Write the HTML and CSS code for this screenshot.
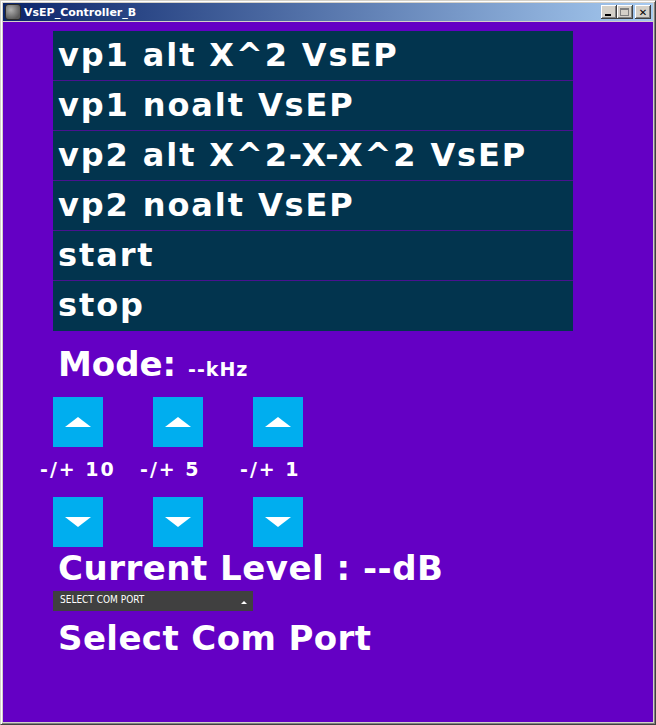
FILE: index.html
```html
<!DOCTYPE html>
<html lang="en">
<head>
  <meta charset="UTF-8" />
  <title>VsEP_Controller_B</title>
  <link rel="stylesheet" href="styles.css">
</head>
<body>
  <div class="window">
    <div class="titlebar">
      <span class="app-icon"></span>
      <span class="title">VsEP_Controller_B</span>
      <div class="caption-buttons">
        <span class="cap-btn min"><i></i></span>
        <span class="cap-btn max"><i></i></span>
        <span class="cap-btn close">&#x2715;</span>
      </div>
    </div>
    <div class="client">
      <ul class="modes">
        <li>vp1 alt X^2 VsEP</li>
        <li>vp1 noalt VsEP</li>
        <li>vp2 alt X^2-X-X^2 VsEP</li>
        <li>vp2 noalt VsEP</li>
        <li>start</li>
        <li>stop</li>
      </ul>

      <div class="mode-line">Mode: <span class="freq">--kHz</span></div>

      <div class="steppers">
        <div class="stepper">
          <button class="step up"></button>
          <span class="step-label">-/+ 10</span>
          <button class="step down"></button>
        </div>
        <div class="stepper">
          <button class="step up"></button>
          <span class="step-label">-/+ 5</span>
          <button class="step down"></button>
        </div>
        <div class="stepper">
          <button class="step up"></button>
          <span class="step-label">-/+ 1</span>
          <button class="step down"></button>
        </div>
      </div>

      <div class="level">Current Level : --dB</div>

      <div class="port-select">
        <span>SELECT COM PORT</span>
        <span class="port-arrow"></span>
      </div>

      <div class="port-status">Select Com Port</div>
    </div>
  </div>
</body>
</html>
```

FILE: styles.css
```css
:root {
  --purple: #6400c4;
  --teal: #02344e;
  --cyan: #00aeef;
  --face: #d4d0c8;
  --white: #ffffff;
}

* {
  box-sizing: border-box;
}

body {
  margin: 0;
  font-family: 'DejaVu Sans', Verdana, sans-serif;
}

.window {
  width: 656px;
  height: 725px;
  display: flex;
  flex-direction: column;
  background: var(--face);
  border: 1px solid;
  border-color: var(--face) #404040 #404040 var(--face);
  box-shadow: inset 1px 1px 0 #fff, inset -1px -1px 0 #808080;
  padding: 2px 2px 2px 2px;
}

.titlebar {
  height: 18px;
  display: flex;
  align-items: center;
  background: linear-gradient(to right, #0a246a, #a6caf0);
  color: var(--white);
  padding: 0 2px 0 2px;
}

.app-icon {
  width: 16px;
  height: 16px;
  margin-right: 3px;
  border-radius: 3px;
  background: radial-gradient(circle at 35% 35%, #b0b0b0, #5a5a5a 75%);
  border: 1px solid #2a2a2a;
}

.title {
  font-family: 'DejaVu Sans', Tahoma, sans-serif;
  font-weight: bold;
  font-size: 11px;
}

.caption-buttons {
  margin-left: auto;
  display: flex;
  align-items: center;
}

.cap-btn {
  width: 16px;
  height: 14px;
  background: var(--face);
  box-shadow: inset -1px -1px 0 #404040, inset 1px 1px 0 #fff, inset -2px -2px 0 #808080;
  display: flex;
  align-items: center;
  justify-content: center;
  color: #000;
  font-size: 10px;
  font-weight: bold;
}

.cap-btn.max {
  margin-right: 2px;
}

.cap-btn.min i {
  width: 6px;
  height: 2px;
  background: #000;
  margin-top: 6px;
  margin-left: -2px;
}

.cap-btn.max i {
  width: 9px;
  height: 8px;
  border: 1px solid #808080;
  border-top-width: 2px;
  margin-left: -1px;
}

.client {
  flex: 1;
  background: var(--purple);
  margin-top: 1px;
  padding: 9px 0 0 50px;
}

.modes {
  list-style: none;
  margin: 0;
  padding: 0;
  width: 520px;
  background: var(--teal);
}

.modes li {
  height: 50px;
  line-height: 48px;
  padding-left: 5px;
  color: var(--white);
  font-weight: bold;
  font-size: 32px;
  letter-spacing: 1.9px;
  border-bottom: 1px solid #4a1290;
}

.modes li:last-child {
  border-bottom: none;
}

.mode-line {
  margin-top: 13px;
  padding-left: 5px;
  color: var(--white);
  font-weight: bold;
  font-size: 34px;
  line-height: 40px;
}

.freq {
  font-size: 19px;
  letter-spacing: 1px;
}

.steppers {
  display: flex;
  gap: 50px;
  margin-top: 8px;
}

.stepper {
  width: 50px;
  display: flex;
  flex-direction: column;
  align-items: flex-start;
}

.step {
  width: 50px;
  height: 50px;
  border: none;
  padding: 0;
  background: var(--cyan);
  display: flex;
  align-items: center;
  justify-content: center;
}

.step::after {
  content: '';
  border-left: 13px solid transparent;
  border-right: 13px solid transparent;
}

.step.up::after {
  border-bottom: 10px solid var(--white);
}

.step.down::after {
  border-top: 10px solid var(--white);
}

.step-label {
  height: 50px;
  margin-left: -13px;
  line-height: 44px;
  color: var(--white);
  font-weight: bold;
  font-size: 19px;
  letter-spacing: 2px;
  white-space: nowrap;
}

.level {
  padding-left: 5px;
  color: var(--white);
  font-weight: bold;
  font-size: 34px;
  line-height: 42px;
  letter-spacing: 0.5px;
}

.port-select {
  margin-top: 2px;
  width: 200px;
  height: 20px;
  background: #404040;
  color: var(--white);
  display: flex;
  align-items: center;
  justify-content: space-between;
  padding: 0 6px 3px 7px;
  font-family: 'DejaVu Sans Condensed', 'Liberation Sans Narrow', sans-serif;
  font-size: 10px;
}

.port-arrow {
  margin-top: 6px;
  border-left: 3px solid transparent;
  border-right: 3px solid transparent;
  border-bottom: 3px solid var(--white);
}

.port-status {
  margin-top: 6px;
  padding-left: 5px;
  color: var(--white);
  font-weight: bold;
  font-size: 34px;
  line-height: 42px;
  letter-spacing: 0.4px;
}
```
